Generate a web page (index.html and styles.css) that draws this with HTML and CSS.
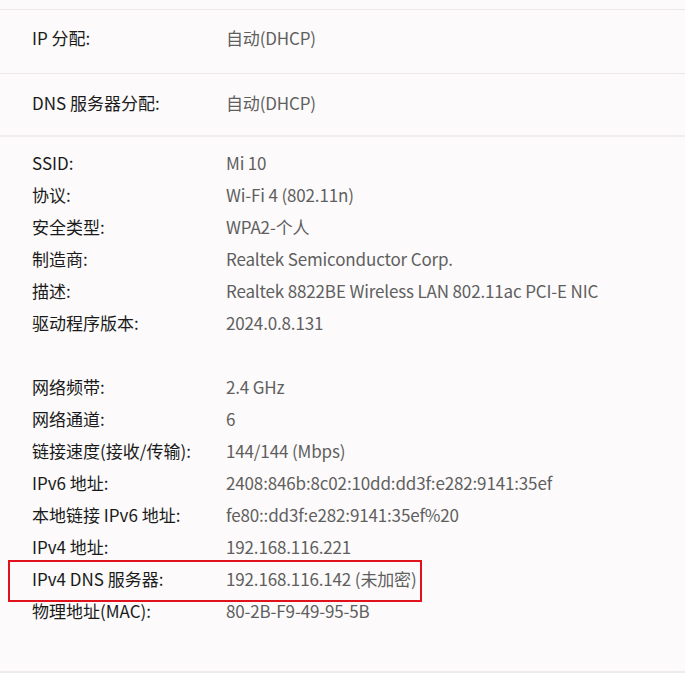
FILE: index.html
```html
<!DOCTYPE html>
<html lang="zh-CN">
<head>
<meta charset="utf-8">
<link rel="stylesheet" href="styles.css">
</head>
<body>
<div class="page">
  <div class="top-edge"></div>
  <div class="section first">
    <span class="label">IP 分配:</span><span class="value">自动(DHCP)</span>
  </div>
  <div class="section second">
    <span class="label">DNS 服务器分配:</span><span class="value">自动(DHCP)</span>
  </div>
  <div class="list">
    <div class="row"><span class="label">SSID:</span><span class="value">Mi 10</span></div>
    <div class="row"><span class="label">协议:</span><span class="value">Wi-Fi 4 (802.11n)</span></div>
    <div class="row"><span class="label">安全类型:</span><span class="value">WPA2-个人</span></div>
    <div class="row"><span class="label">制造商:</span><span class="value">Realtek Semiconductor Corp.</span></div>
    <div class="row"><span class="label">描述:</span><span class="value">Realtek 8822BE Wireless LAN 802.11ac PCI-E NIC</span></div>
    <div class="row"><span class="label">驱动程序版本:</span><span class="value">2024.0.8.131</span></div>
    <div class="row spacer"></div>
    <div class="row"><span class="label">网络频带:</span><span class="value">2.4 GHz</span></div>
    <div class="row"><span class="label">网络通道:</span><span class="value">6</span></div>
    <div class="row"><span class="label">链接速度(接收/传输):</span><span class="value">144/144 (Mbps)</span></div>
    <div class="row"><span class="label">IPv6 地址:</span><span class="value">2408:846b:8c02:10dd:dd3f:e282:9141:35ef</span></div>
    <div class="row"><span class="label">本地链接 IPv6 地址:</span><span class="value">fe80::dd3f:e282:9141:35ef%20</span></div>
    <div class="row"><span class="label">IPv4 地址:</span><span class="value">192.168.116.221</span></div>
    <div class="row highlighted"><span class="label">IPv4 DNS 服务器:</span><span class="value">192.168.116.142 (未加密)</span><span class="mark"></span></div>
    <div class="row"><span class="label">物理地址(MAC):</span><span class="value">80-2B-F9-49-95-5B</span></div>
  </div>
</div>
</body>
</html>
```
FILE: styles.css
```css
html, body {
  margin: 0;
  padding: 0;
  background: #fcfafa;
}
.page {
  width: 685px;
  height: 673px;
  overflow: hidden;
  font-family: "Noto Sans CJK SC", "Noto Sans", sans-serif;
  font-size: 17px;
  -webkit-font-smoothing: antialiased;
}
.top-edge {
  height: 9px;
  border-bottom: 1px solid #ede9e9;
}
.section {
  display: grid;
  grid-template-columns: 194px 1fr;
  align-items: center;
  padding-left: 32px;
  box-sizing: border-box;
}
.section.first {
  height: 64px;
  padding-bottom: 8px;
  border-bottom: 1px solid #ede9e9;
}
.section.second {
  height: 63px;
  padding-bottom: 5px;
  border-bottom: 2px solid #f3ecec;
}
.list {
  padding: 9px 0 45px 0;
  border-bottom: 2px solid #f0ebeb;
}
.row {
  position: relative;
  display: grid;
  grid-template-columns: 194px 1fr;
  align-items: center;
  height: 32px;
  padding-left: 32px;
}
.label {
  color: #1a1a1a;
  white-space: nowrap;
}
.value {
  color: #5f5f5f;
  white-space: nowrap;
  letter-spacing: -0.15px;
}
.mark {
  position: absolute;
  left: 8px;
  top: -2px;
  width: 414px;
  height: 42px;
  box-sizing: border-box;
  border: 2px solid #e0121c;
}
```
